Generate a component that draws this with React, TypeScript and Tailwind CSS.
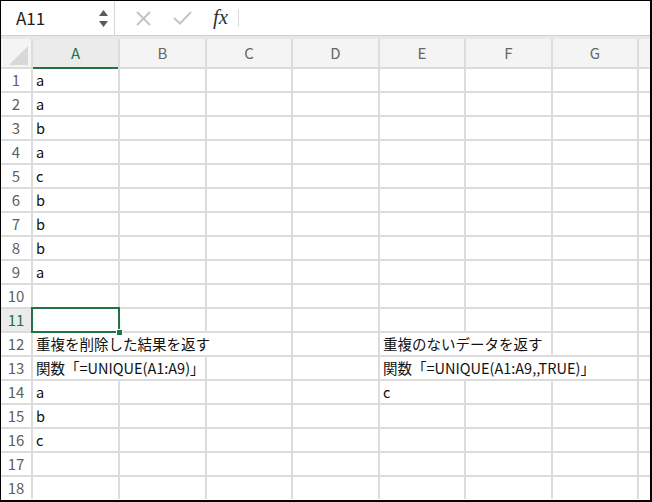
import React from "react";

type Cell = { col: number; span?: number; text: string };

const cols = ["A", "B", "C", "D", "E", "F", "G", ""];

const spanClass: Record<number, string> = {
  1: "",
  2: "col-span-2",
  3: "col-span-3",
};

const rows: Record<number, Cell[]> = {
  1: [{ col: 0, text: "a" }],
  2: [{ col: 0, text: "a" }],
  3: [{ col: 0, text: "b" }],
  4: [{ col: 0, text: "a" }],
  5: [{ col: 0, text: "c" }],
  6: [{ col: 0, text: "b" }],
  7: [{ col: 0, text: "b" }],
  8: [{ col: 0, text: "b" }],
  9: [{ col: 0, text: "a" }],
  12: [
    { col: 0, span: 3, text: "重複を削除した結果を返す" },
    { col: 4, span: 2, text: "重複のないデータを返す" },
  ],
  13: [
    { col: 0, span: 2, text: "関数「=UNIQUE(A1:A9)」" },
    { col: 4, span: 3, text: "関数「=UNIQUE(A1:A9,,TRUE)」" },
  ],
  14: [
    { col: 0, text: "a" },
    { col: 4, text: "c" },
  ],
  15: [{ col: 0, text: "b" }],
  16: [{ col: 0, text: "c" }],
};

const GREEN = "#217346";

function FormulaBar() {
  return (
    <div className="flex h-[35px] items-center border-b border-[#cfcfcf] bg-white">
      {/* name box */}
      <div className="flex h-full w-[114px] items-center justify-between border-r border-[#d4d4d4] pl-[15px] pr-[6px]">
        <span className="text-[17px] text-[#222]">A11</span>
        <div className="flex flex-col items-center gap-[5px]">
          <svg width="9" height="6" viewBox="0 0 9 6">
            <path d="M4.5 0 L9 6 L0 6 Z" fill="#5a5a5a" />
          </svg>
          <svg width="9" height="6" viewBox="0 0 9 6">
            <path d="M0 0 L9 0 L4.5 6 Z" fill="#5a5a5a" />
          </svg>
        </div>
      </div>
      <div className="flex h-full items-center pl-[21px]">
        <svg width="15" height="15" viewBox="0 0 15 15">
          <path d="M1 1 L14 14 M14 1 L1 14" stroke="#c4c4c4" strokeWidth="2" />
        </svg>
        <svg className="ml-[22px]" width="19" height="14" viewBox="0 0 19 14">
          <path d="M1 7 L7 12.5 L18 1" stroke="#c4c4c4" strokeWidth="2" fill="none" />
        </svg>
        <span
          className="ml-[21px] text-[21px] italic text-[#333]"
          style={{ fontFamily: '"Liberation Serif", serif' }}
        >
          fx
        </span>
        <div className="ml-[10px] h-[18px] w-[1px] bg-[#dcdcdc]" />
      </div>
    </div>
  );
}

export default function App() {
  return (
    <div
      className="h-[502px] w-[652px] overflow-hidden border-t border-l border-r-2 border-b-2 border-black bg-white"
      style={{ fontFamily: '"Noto Sans CJK JP", "Noto Sans", sans-serif' }}
    >
      <FormulaBar />
      <div className="h-[3px] bg-[#e8e8e8]" />

      <div className="grid grid-cols-[30px_85px_85px_84px_85px_84px_85px_84px_1fr] gap-[2px] bg-[#dcdcdc]">
        {/* header row */}
        <div className="relative h-[28px] bg-[#f4f4f4]">
          <svg className="absolute right-[3px] bottom-[2px]" width="19" height="19" viewBox="0 0 19 19">
            <path d="M19 0 L19 19 L0 19 Z" fill="#d8d8d8" />
          </svg>
        </div>
        {cols.map((c, i) => (
          <div
            key={i}
            className={
              i === 0
                ? "relative flex h-[28px] items-center justify-center bg-[#ebebeb] text-[15px] text-[#217346]"
                : "flex h-[28px] items-center justify-center bg-[#f4f4f4] text-[15px] text-[#666]"
            }
          >
            {c}
            {i === 0 && (
              <div className="absolute right-0 -bottom-[2px] left-0 h-[2px] bg-[#217346]" />
            )}
          </div>
        ))}

        {Array.from({ length: 18 }, (_, r) => {
          const n = r + 1;
          const cells = rows[n] || [];
          const out: React.ReactNode[] = [];
          out.push(
            <div
              key={`h${n}`}
              className={
                n === 11
                  ? "flex h-[22px] items-center justify-center bg-[#ebebeb] text-[15px] text-[#217346]"
                  : "flex h-[22px] items-center justify-center bg-white text-[15px] text-[#5f5f5f]"
              }
            >
              {n}
            </div>
          );
          let c = 0;
          while (c < cols.length) {
            const cell = cells.find((x) => x.col === c);
            const span = cell?.span ?? 1;
            const selected = n === 11 && c === 0;
            out.push(
              <div
                key={`${n}-${c}`}
                className={`relative flex h-[22px] items-center whitespace-nowrap bg-white pl-[3px] text-[14.5px] text-[#111] ${spanClass[span]} ${selected ? "z-10" : ""}`}
              >
                {cell?.text}
                {selected && (
                  <>
                    <div
                      className="absolute -inset-[2px] border-2"
                      style={{ borderColor: GREEN }}
                    />
                    <div
                      className="absolute -right-[5px] -bottom-[5px] h-[7px] w-[7px] border border-white"
                      style={{ backgroundColor: GREEN }}
                    />
                  </>
                )}
              </div>
            );
            c += span;
          }
          return out;
        })}
      </div>
    </div>
  );
}
